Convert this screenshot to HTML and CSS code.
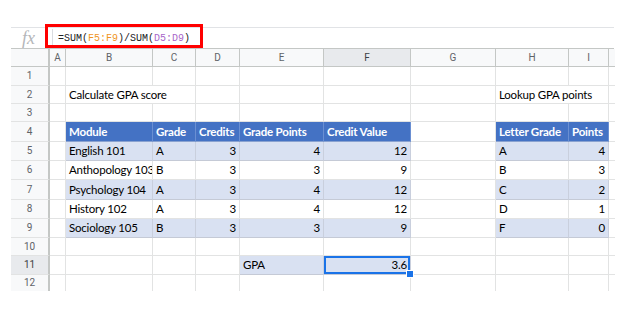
FILE: index.html
```html
<!DOCTYPE html>
<html>
<head>
<meta charset="utf-8">
<link rel="stylesheet" href="styles.css">
</head>
<body>
<div class="sheet">
  <div class="fbar">
    <span class="fx">fx</span>
    <span class="sep"></span>
    <span class="formula">=SUM(<span class="rf">F5:F9</span>)/SUM(<span class="rd">D5:D9</span>)</span>
  </div>
  <div class="grid">
    <div class="row hdr">
      <div class="c corner"></div><div class="c ch">A</div><div class="c ch">B</div><div class="c ch">C</div><div class="c ch">D</div><div class="c ch">E</div><div class="c ch on">F</div><div class="c ch">G</div><div class="c ch">H</div><div class="c ch">I</div><div class="c ch end"></div>
    </div>
    <div class="row r19">
      <div class="c rh">1</div><div class="c"></div><div class="c"></div><div class="c"></div><div class="c"></div><div class="c"></div><div class="c"></div><div class="c"></div><div class="c"></div><div class="c"></div><div class="c end"></div>
    </div>
    <div class="row r18">
      <div class="c rh">2</div><div class="c"></div><div class="c span2">Calculate GPA score</div><div class="c"></div><div class="c"></div><div class="c"></div><div class="c"></div><div class="c span2">Lookup GPA points</div><div class="c end"></div>
    </div>
    <div class="row r18">
      <div class="c rh">3</div><div class="c"></div><div class="c"></div><div class="c"></div><div class="c"></div><div class="c"></div><div class="c"></div><div class="c"></div><div class="c"></div><div class="c"></div><div class="c end"></div>
    </div>
    <div class="row r20">
      <div class="c rh">4</div><div class="c"></div><div class="c h">Module</div><div class="c h">Grade</div><div class="c h">Credits</div><div class="c h">Grade Points</div><div class="c h">Credit Value</div><div class="c"></div><div class="c h">Letter Grade</div><div class="c h">Points</div><div class="c end"></div>
    </div>
    <div class="row r19">
      <div class="c rh">5</div><div class="c"></div><div class="c l">English 101</div><div class="c l">A</div><div class="c l n">3</div><div class="c l n">4</div><div class="c l n">12</div><div class="c"></div><div class="c l">A</div><div class="c l n">4</div><div class="c end"></div>
    </div>
    <div class="row r19">
      <div class="c rh">6</div><div class="c"></div><div class="c">Anthopology 103</div><div class="c">B</div><div class="c n">3</div><div class="c n">3</div><div class="c n">9</div><div class="c"></div><div class="c">B</div><div class="c n">3</div><div class="c end"></div>
    </div>
    <div class="row r20">
      <div class="c rh">7</div><div class="c"></div><div class="c l">Psychology 104</div><div class="c l">A</div><div class="c l n">3</div><div class="c l n">4</div><div class="c l n">12</div><div class="c"></div><div class="c l">C</div><div class="c l n">2</div><div class="c end"></div>
    </div>
    <div class="row r19">
      <div class="c rh">8</div><div class="c"></div><div class="c">History 102</div><div class="c">A</div><div class="c n">3</div><div class="c n">4</div><div class="c n">12</div><div class="c"></div><div class="c">D</div><div class="c n">1</div><div class="c end"></div>
    </div>
    <div class="row r19">
      <div class="c rh">9</div><div class="c"></div><div class="c l">Sociology 105</div><div class="c l">B</div><div class="c l n">3</div><div class="c l n">3</div><div class="c l n">9</div><div class="c"></div><div class="c l">F</div><div class="c l n">0</div><div class="c end"></div>
    </div>
    <div class="row r18">
      <div class="c rh">10</div><div class="c"></div><div class="c"></div><div class="c"></div><div class="c"></div><div class="c"></div><div class="c"></div><div class="c"></div><div class="c"></div><div class="c"></div><div class="c end"></div>
    </div>
    <div class="row r19">
      <div class="c rh on">11</div><div class="c"></div><div class="c"></div><div class="c"></div><div class="c"></div><div class="c l">GPA</div><div class="c l n sel">3.6<span class="handle"></span></div><div class="c"></div><div class="c"></div><div class="c"></div><div class="c end"></div>
    </div>
    <div class="row r16 last">
      <div class="c rh">12</div><div class="c"></div><div class="c"></div><div class="c"></div><div class="c"></div><div class="c"></div><div class="c"></div><div class="c"></div><div class="c"></div><div class="c"></div><div class="c end"></div>
    </div>
  </div>
  <div class="callout"></div>
</div>
</body>
</html>
```

FILE: styles.css
```css
html, body {
  margin: 0;
  padding: 0;
  background: #ffffff;
}

.sheet {
  position: relative;
  margin: 27px 0 0 11px;
  width: 603px;
  font-family: Lato, "Open Sans", sans-serif;
}

.fbar {
  height: 21px;
  box-sizing: border-box;
  border-top: 1px solid #e1e3e6;
  display: flex;
  align-items: center;
}

.fx {
  width: 30px;
  padding-left: 11px;
  font-family: "Liberation Serif", serif;
  font-style: italic;
  font-size: 18px;
  color: #b4b6b9;
  line-height: 18px;
}

.sep {
  width: 1px;
  height: 18px;
  background: #dadce0;
}

.formula {
  margin-left: 5px;
  font-family: "Liberation Mono", monospace;
  font-size: 10px;
  color: #202124;
  padding-top: 1px;
}

.rf { color: #f0951e; }
.rd { color: #a866c9; }

.grid {
  border-top: 1px solid #c4c7c5;
}

.row {
  display: grid;
  grid-template-columns: 39px 16px 87px 43px 44px 84px 87px 85px 73px 40px 5px;
  height: 19px;
}

.hdr { height: 18px; }
.r16 { height: 16px; }
.r18 { height: 18px; }
.r19 { height: 19px; }
.r20 { height: 20px; }

.c {
  box-sizing: border-box;
  border-right: 1px solid #e2e3e3;
  border-bottom: 1px solid #e2e3e3;
  font-size: 11.5px;
  letter-spacing: -0.2px;
  color: #000000;
  padding: 0 3px;
  display: flex;
  align-items: center;
  white-space: nowrap;
  overflow: hidden;
  position: relative;
  line-height: 14px;
}

.last .c { border-bottom: none; }
.end { border-right: none; }

.span2 {
  grid-column: span 2;
  overflow: visible;
}

.ch, .corner {
  background: #f8f9fa;
  border-right-color: #c4c7c5;
  border-bottom-color: #c4c7c5;
  justify-content: center;
  font-family: Roboto, sans-serif;
  font-size: 10px;
  letter-spacing: 0;
  color: #5f6368;
}

.ch.end { border-right: none; }

.corner { border-right: 2px solid #c4c7c5; }

.rh {
  background: #f8f9fa;
  border-right: 2px solid #c4c7c5;
  border-bottom-color: #e2e3e3;
  justify-content: center;
  font-family: Roboto, sans-serif;
  font-size: 10px;
  letter-spacing: 0;
  color: #5f6368;
}

.on {
  background: #e8eaed;
  color: #3c4043;
}

.h {
  background: #4472c4;
  color: #ffffff;
  font-weight: bold;
  border-right-color: #6a8fd2;
  border-bottom-color: #8aa2d0;
}

.l {
  background: #d9e1f2;
  border-right-color: #c9cfdd;
  border-bottom-color: #c5cad6;
}

.n { justify-content: flex-end; }

.sel {
  overflow: visible;
  box-shadow: inset 0 0 0 2px #1a73e8;
}

.handle {
  position: absolute;
  right: -4px;
  bottom: -4px;
  width: 6px;
  height: 6px;
  background: #1a73e8;
  border: 1px solid #ffffff;
  z-index: 2;
}

.callout {
  position: absolute;
  left: 34px;
  top: -3px;
  width: 158px;
  height: 24px;
  box-sizing: border-box;
  border: 3px solid #ff0000;
}
```
